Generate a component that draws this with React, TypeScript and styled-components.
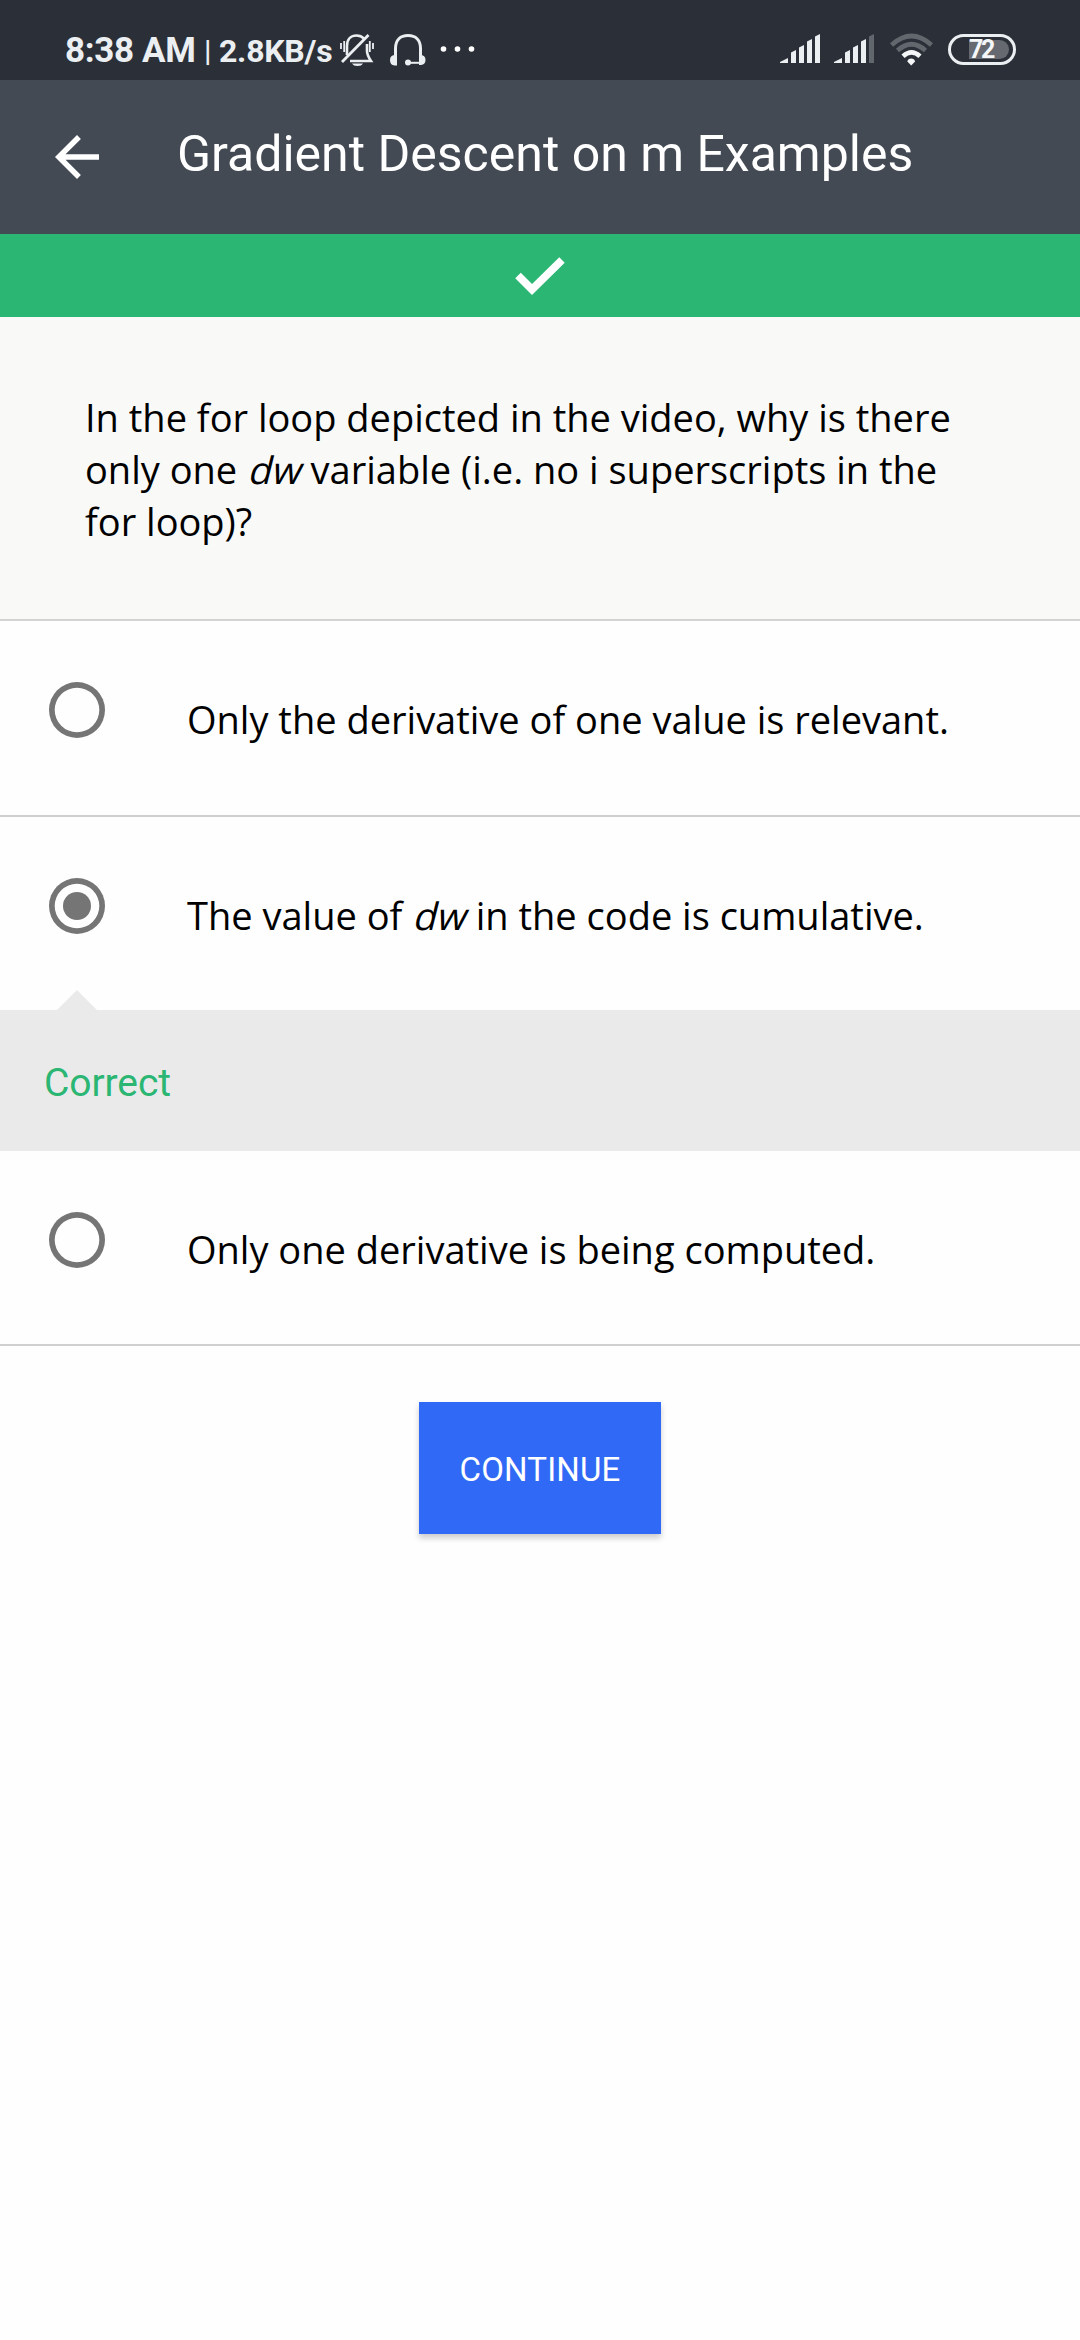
import React, { useState } from "react";
import styled, { createGlobalStyle } from "styled-components";

const GlobalStyle = createGlobalStyle`
  * { box-sizing: border-box; }
  body { margin: 0; background: #fefefe; }
`;

const Screen = styled.div`
  display: flex;
  flex-direction: column;
  width: 1080px;
  height: 2340px;
  overflow: hidden;
  background: #fefefe;
  font-family: Roboto, "Liberation Sans", sans-serif;
  font-kerning: normal;
`;

const StatusBar = styled.div`
  display: flex;
  justify-content: space-between;
  flex: none;
  height: 80px;
  padding: 0 64px 0 65px;
  background: #2b2f37;
  color: #eceff2;
`;

const StatusGroup = styled.div`
  display: flex;
  align-items: flex-start;
`;

const StatusText = styled.span<{ $size: number; $top: number; $width: number; $spacing?: number; $weight?: number }>`
  flex: none;
  width: ${(p) => p.$width}px;
  margin-top: ${(p) => p.$top}px;
  font-size: ${(p) => p.$size}px;
  line-height: 40px;
  font-weight: ${(p) => p.$weight ?? 700};
  letter-spacing: ${(p) => p.$spacing ?? 0}px;
  white-space: nowrap;
`;

const StatusIcon = styled.svg<{ $gap?: number }>`
  flex: none;
  display: block;
  height: 80px;
  margin-left: ${(p) => p.$gap ?? 0}px;
`;

const Battery = styled.div`
  display: flex;
  flex: none;
  width: 68px;
  height: 31px;
  margin: 34px 0 0 14px;
  padding: 3px 4px 3px 18px;
  border: 3px solid #eceff2;
  border-radius: 16px;
`;

const BatteryLevel = styled.div`
  width: 40px;
  height: 19px;
  border-radius: 0 10px 10px 0;
  background: #666a70;
  color: #f4f6f8;
  font-size: 25px;
  line-height: 19px;
  font-weight: 700;
  letter-spacing: -2.4px;
`;

const AppBar = styled.header`
  display: flex;
  flex: none;
  height: 154px;
  padding-left: 55px;
  background: #444a54;
  color: #fff;
`;

const BackButton = styled.button`
  display: flex;
  width: 44px;
  height: 44px;
  margin-top: 55px;
  padding: 0;
  border: 0;
  background: none;
  color: inherit;
`;

const Title = styled.h1`
  margin: 44px 0 0 78px;
  font-size: 50px;
  line-height: 60px;
  font-weight: 400;
  white-space: nowrap;
`;

const ResultBanner = styled.div`
  display: flex;
  flex: none;
  justify-content: center;
  height: 83px;
  padding-top: 23px;
  background: #2bb673;
`;

const Question = styled.section`
  flex: none;
  height: 304px;
  padding: 74px 85px 0;
  border-bottom: 2px solid #d3d3d3;
  background: #f9f9f8;
`;

const Prose = styled.p`
  margin: 0;
  color: #000;
  font-family: "Open Sans", "Noto Sans", sans-serif;
  font-size: 38px;
  line-height: 52px;
  white-space: nowrap;
`;

const Variable = styled.em`
  display: inline-block;
  margin-right: 1px;
  font-style: normal;
  transform: skewX(-14deg);
  transform-origin: 0 78%;
`;

const Choice = styled.div<{ $height: number; $divider: boolean }>`
  display: flex;
  flex: none;
  height: ${(p) => p.$height}px;
  padding-left: 49px;
  border-bottom: ${(p) => (p.$divider ? "2px solid #cfcfcf" : "0")};
`;

const Radio = styled.button`
  display: flex;
  flex: none;
  align-items: center;
  justify-content: center;
  width: 56px;
  height: 56px;
  margin-top: 61px;
  padding: 0;
  border: 0;
  border-radius: 50%;
  background: transparent;
  box-shadow: inset 0 0 0 5.7px #757575;
`;

const RadioDot = styled.span`
  width: 28px;
  height: 28px;
  border-radius: 50%;
  background: #757575;
`;

const ChoiceLabel = styled(Prose)`
  margin: 72px 0 0 82px;
`;

const Feedback = styled.div`
  position: relative;
  flex: none;
  height: 141px;
  padding: 49px 44px 0;
  background: #eaeaea;
  color: #2bb673;
  font-size: 39px;
  line-height: 48px;
  letter-spacing: -0.1px;

  &::before {
    content: "";
    position: absolute;
    left: 57px;
    top: -20px;
    border: solid transparent;
    border-width: 0 20px 20px;
    border-bottom-color: #eaeaea;
  }
`;

const ContinueButton = styled.button`
  flex: none;
  align-self: center;
  width: 242px;
  height: 132px;
  margin-top: 56px;
  padding: 3px 0 0;
  border: 0;
  background: #3069f6;
  box-shadow: 0 4px 6px rgba(0, 0, 0, 0.2);
  color: #fff;
  font-family: inherit;
  font-size: 33px;
  letter-spacing: 0.15px;
`;

const BAR_X = [0, 11, 19, 27, 35];
const BAR_TOP = [58, 50, 45, 39, 34];

function Signal({ active, gap }: { active: number; gap?: number }) {
  return (
    <StatusIcon $gap={gap} width={40} viewBox="0 0 40 80">
      {BAR_X.map((x, i) => {
        const w = i === 0 ? 8 : 5;
        const slope = i === 0 ? 4 : 2.5;
        return (
          <path
            key={x}
            d={`M${x} ${BAR_TOP[i] + slope}L${x + w} ${BAR_TOP[i]}V63H${x}Z`}
            fill={i < active ? "#eceff2" : "#62666d"}
          />
        );
      })}
    </StatusIcon>
  );
}

function MutedBell() {
  return (
    <StatusIcon width={34} viewBox="0 0 34 80" fill="none" stroke="#eceff2" strokeWidth="2.6">
      <path d="M7 55V46C7 39 11 35.5 16.5 35.5C20 35.5 22 36.5 24 38.5" />
      <path d="M27 44V51Q27 55 31 61H10" />
      <path d="M2 62L28.5 35" strokeWidth="2.8" />
      <path d="M1 43V49M4.2 41V52M29.8 41V52M33 43V49" strokeWidth="1.8" />
      <path d="M12 63.5H23Q21.5 66 17.5 66T12 63.5Z" fill="#eceff2" stroke="none" />
    </StatusIcon>
  );
}

function Headset() {
  return (
    <StatusIcon $gap={16} width={36} viewBox="0 0 36 80" fill="none" stroke="#eceff2" strokeWidth="3">
      <path d="M5.5 58V48.5C5.5 40 10.5 35.5 18 35.5S30.5 40 30.5 48.5V58" />
      <path d="M18 62.8H32" strokeWidth="2" />
      <g fill="#eceff2" stroke="none">
        <path d="M4.500 55H7V65.500H4.500Q0 65 0 60.200T4.500 55ZM29 55H31Q35.500 55.500 35.500 60T31 65H29Z" />
        <circle cx="18" cy="62.5" r="3" />
      </g>
    </StatusIcon>
  );
}

function Wifi() {
  return (
    <StatusIcon $gap={16} width={44} viewBox="0 0 44 80" fill="none" strokeWidth="4.6">
      <path d="M1.500 45Q21.500 27 41.500 45" stroke="#62666d" />
      <path d="M7.500 50.500Q21.500 38 35.500 50.500" stroke="#62666d" />
      <path d="M13 56.300Q21.500 48.500 30 56.300" stroke="#f4f6f8" />
      <path d="M17.300 61.500Q18 58.600 21.200 58.600T25.100 61.500L21.200 65.500Z" fill="#f4f6f8" />
    </StatusIcon>
  );
}

const choices = [
  { id: 0, label: <>Only the derivative of one value is relevant.</>, height: 196, divider: true },
  {
    id: 1,
    label: <>The value of <Variable>dw</Variable> in the code is cumulative.</>,
    height: 193,
    divider: false,
    correct: true,
  },
  { id: 2, label: <>Only one derivative is being computed.</>, height: 195, divider: true },
];

export default function App() {
  const [selected, setSelected] = useState(1);
  return (
    <Screen>
      <GlobalStyle />
      <StatusBar>
        <StatusGroup>
          <StatusText $size={35} $top={31} $width={139} $spacing={-0.35}>8:38 AM</StatusText>
          <StatusText $size={30} $top={31} $width={15} $weight={500}>|</StatusText>
          <StatusText $size={32} $top={31} $width={121} $spacing={-0.25}>2.8KB/s</StatusText>
          <MutedBell />
          <Headset />
          <StatusIcon $gap={14} width={36} viewBox="0 0 36 80" fill="#fff">
            <circle cx="3.5" cy="49" r="2.8" />
            <circle cx="17.5" cy="49" r="2.8" />
            <circle cx="31.5" cy="49" r="2.8" />
          </StatusIcon>
        </StatusGroup>
        <StatusGroup>
          <Signal active={5} />
          <Signal active={4} gap={14} />
          <Wifi />
          <Battery>
            <BatteryLevel>72</BatteryLevel>
          </Battery>
        </StatusGroup>
      </StatusBar>
      <AppBar>
        <BackButton aria-label="Back">
          <svg width="44" height="44" viewBox="4 4 16 16" fill="currentColor">
            <path d="M20 11H7.830l5.590-5.590L12 4l-8 8 8 8 1.410-1.410L7.830 13H20v-2z" />
          </svg>
        </BackButton>
        <Title>Gradient Descent on m Examples</Title>
      </AppBar>
      <ResultBanner>
        <svg width="50" height="38" viewBox="0 0 50 38">
          <path d="M3 18.500L17 32.500L47 3" fill="none" stroke="#fff" strokeWidth="7.8" />
        </svg>
      </ResultBanner>
      <Question>
        <Prose>
          In the for loop depicted in the video, why is there
          <br />
          only one <Variable>dw</Variable> variable (i.e. no i superscripts in the
          <br />
          for loop)?
        </Prose>
      </Question>
      {choices.map((c) => (
        <React.Fragment key={c.id}>
          <Choice $height={c.height} $divider={c.divider}>
            <Radio role="radio" aria-checked={selected === c.id} onClick={() => setSelected(c.id)}>
              {selected === c.id && <RadioDot />}
            </Radio>
            <ChoiceLabel>{c.label}</ChoiceLabel>
          </Choice>
          {c.correct && <Feedback>Correct</Feedback>}
        </React.Fragment>
      ))}
      <ContinueButton>CONTINUE</ContinueButton>
    </Screen>
  );
}
